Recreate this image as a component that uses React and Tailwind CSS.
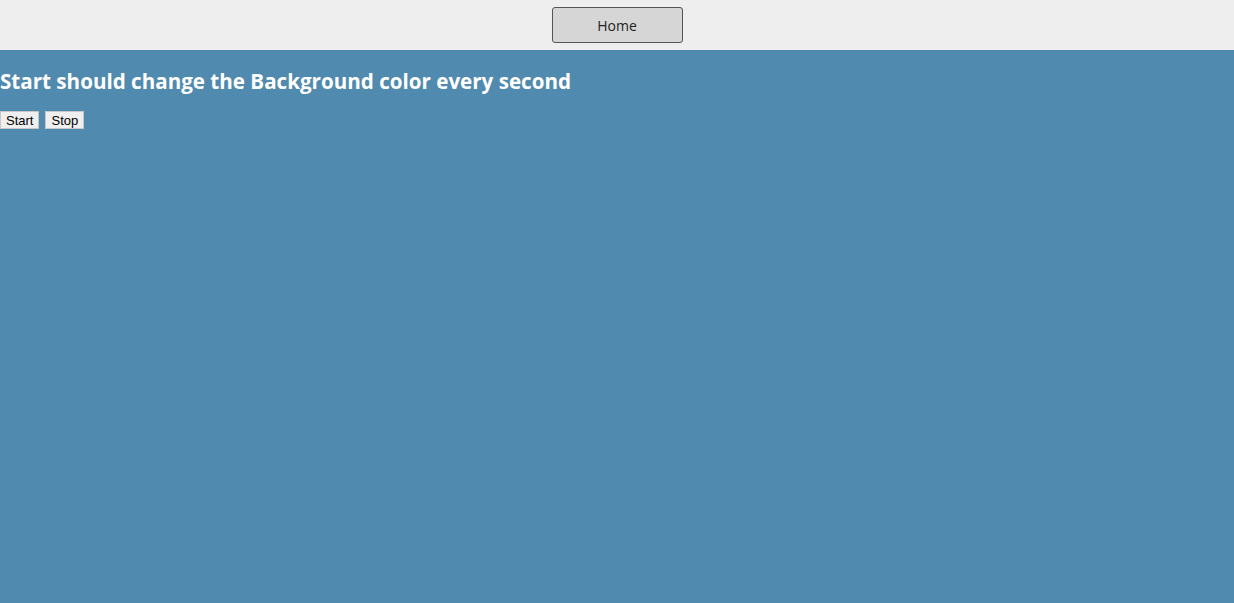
import React, { useState, useEffect } from 'react';

const App = () => {
  const [color, setColor] = useState('#508aae');
  const [running, setRunning] = useState(false);

  useEffect(() => {
    if (!running) return;
    const t = setInterval(() => {
      setColor('#' + Math.floor(Math.random() * 0xffffff).toString(16).padStart(6, '0'));
    }, 1000);
    return () => clearInterval(t);
  }, [running]);

  return (
    <div className="min-h-screen flex flex-col" style={{ fontFamily: '"Open Sans", sans-serif' }}>
      <div className="h-[50px] bg-[#eeeeee] flex justify-center items-start pt-[7px]">
        <button className="w-[131px] h-[36px] bg-[#d6d6d6] border border-[#555] rounded-[3px] text-[14px] text-[#222]">
          Home
        </button>
      </div>
      <div className="flex-1" style={{ backgroundColor: color }}>
        <h2 className="text-white font-bold text-[20.6px] mt-[15px] mb-[14px] leading-[32px]">
          Start should change the Background color every second
        </h2>
        <div className="flex gap-[6px]" style={{ fontFamily: '"Liberation Sans", Arial, sans-serif' }}>
          <button
            onClick={() => setRunning(true)}
            className="h-[18px] px-[5px] bg-[#efefef] border border-[#c8c8c8] text-[13px] text-black leading-none"
          >
            Start
          </button>
          <button
            onClick={() => setRunning(false)}
            className="h-[18px] px-[5px] bg-[#efefef] border border-[#c8c8c8] text-[13px] text-black leading-none"
          >
            Stop
          </button>
        </div>
      </div>
    </div>
  );
};

export default App;
